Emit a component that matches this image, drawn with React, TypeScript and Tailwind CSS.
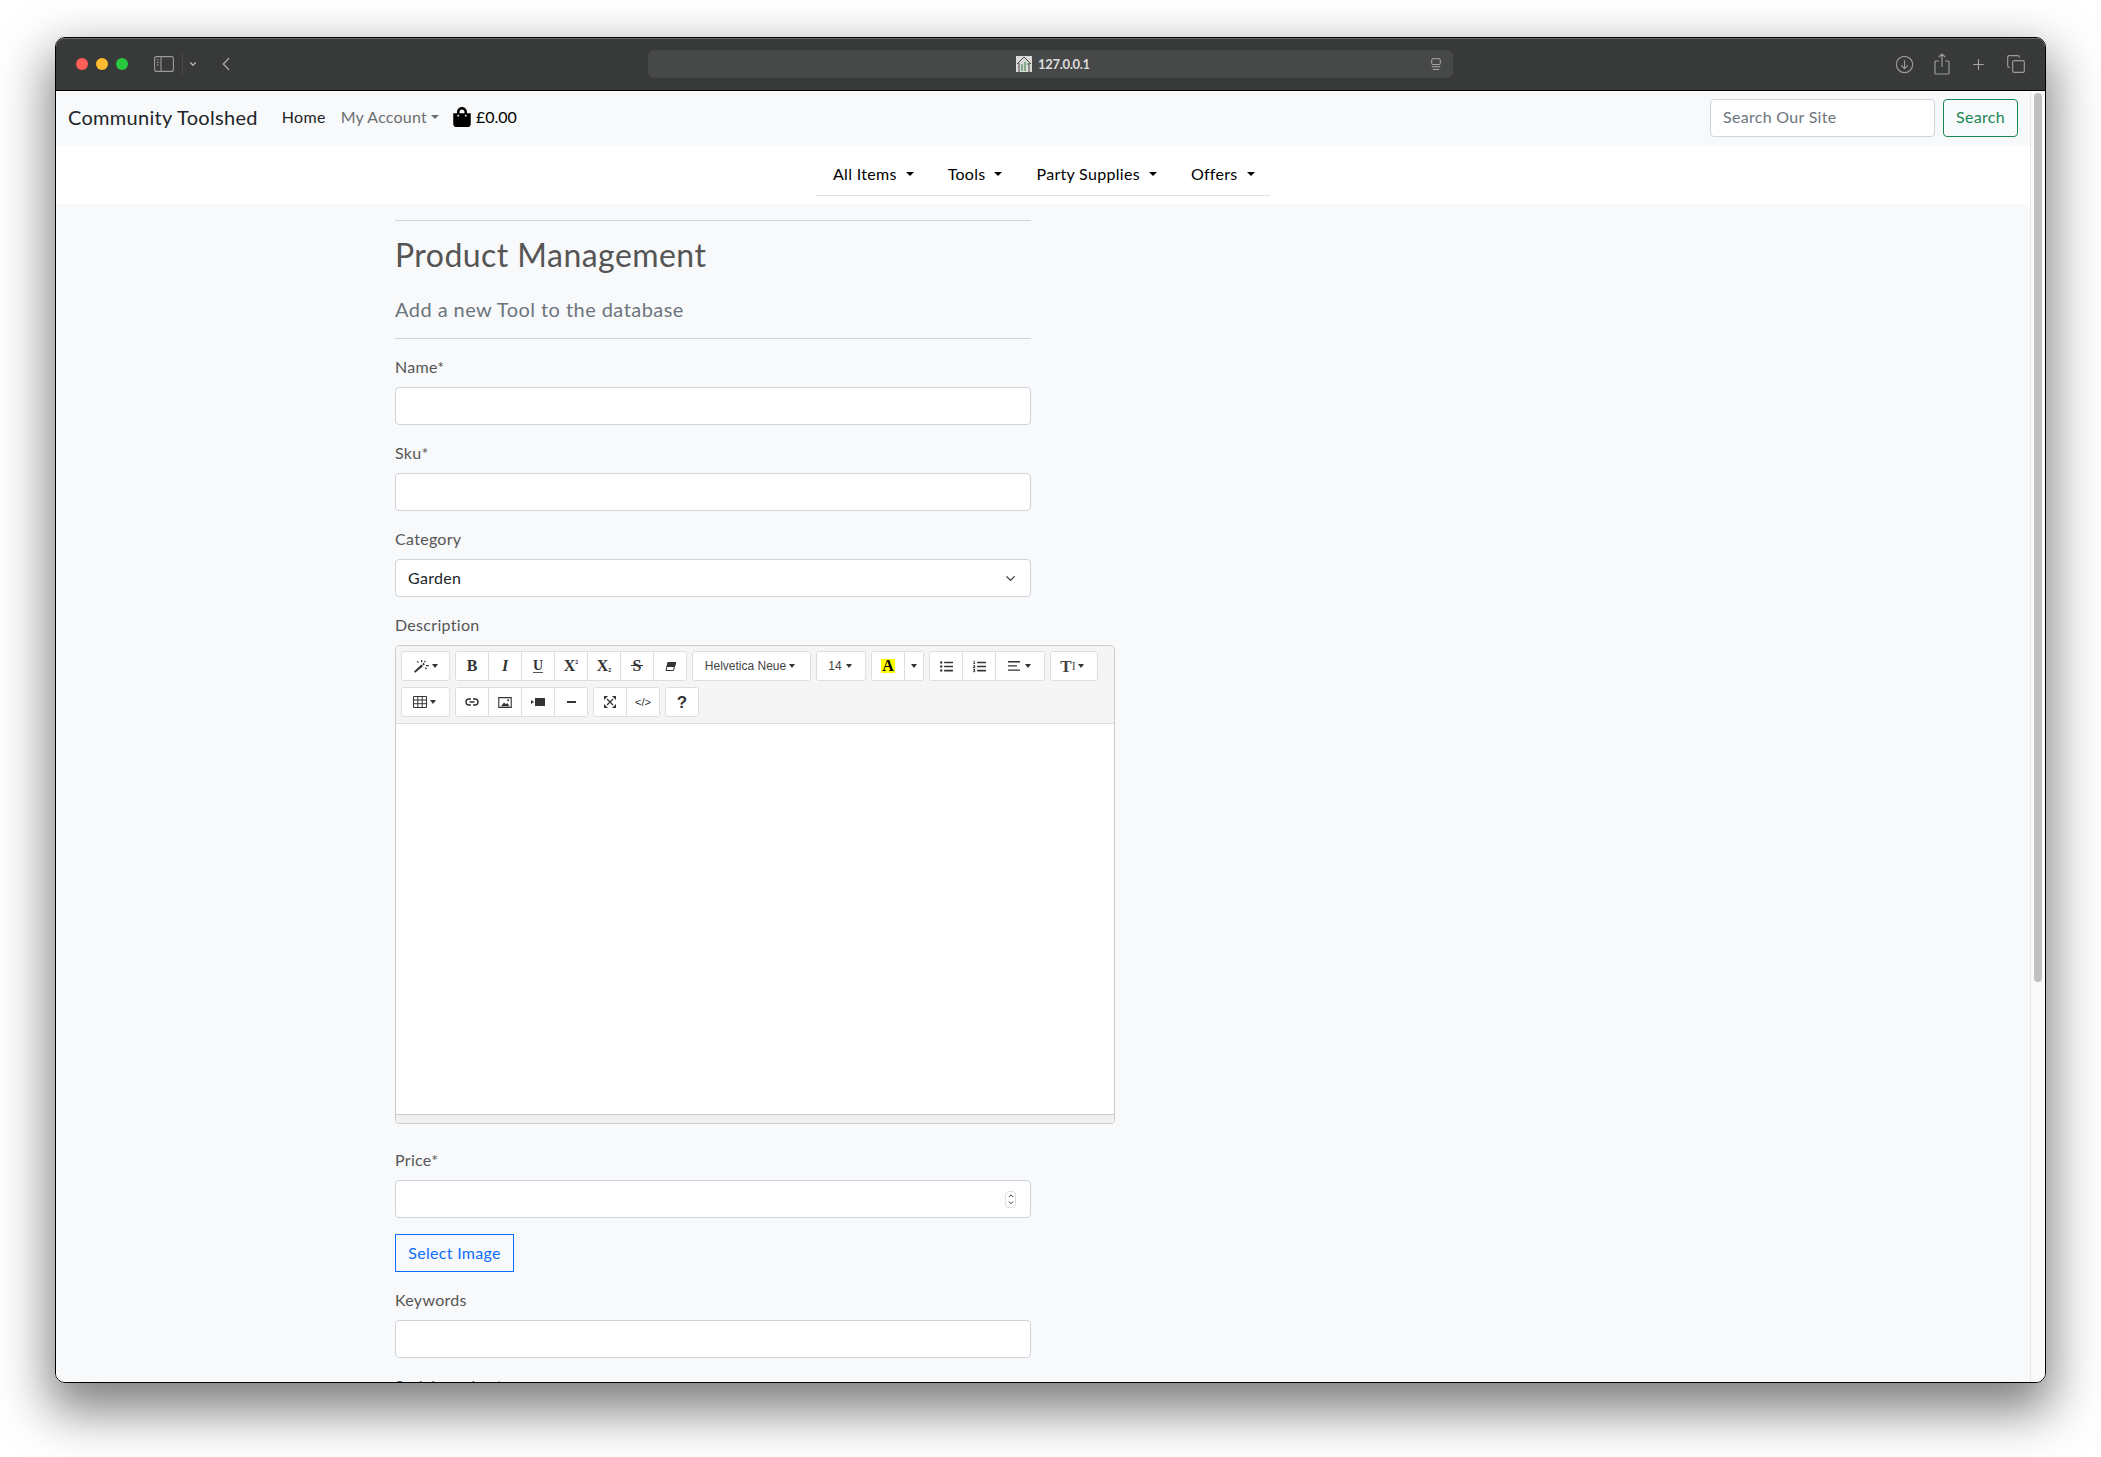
import { FaListOl, FaListUl, FaShoppingBag } from "react-icons/fa";
import { ChevronDown, ChevronLeft, ChevronUp, Copy, Plus } from "lucide-react";
import type { ReactNode } from "react";

const BODY_FONT = "font-['Lato','Noto_Sans',sans-serif]";
const TOOL_BTN =
  "flex h-[28px] items-center justify-center border-r border-[#ddd] bg-white text-[#333] last:border-r-0";

function Caret({ className = "" }: { className?: string }) {
  return <span className={`inline-block h-0 w-0 border-x-[3.5px] border-t-[4px] border-x-transparent border-t-current ${className}`} />;
}

function NavCaret() {
  return <span className="ml-[9px] inline-block h-0 w-0 border-x-[4px] border-t-[4.5px] border-x-transparent border-t-current" />;
}

function Field({ label, children }: { label: string; children: ReactNode }) {
  return (
    <div className="mb-4">
      <div className="mb-2 h-6 text-[16px] leading-6 text-[#555]">{label}</div>
      {children}
    </div>
  );
}

function TextBox({ children }: { children?: ReactNode }) {
  return (
    <div className="flex h-[38px] w-[636px] items-center rounded-[4px] border border-[#ced4da] bg-white">{children}</div>
  );
}

function ToolGroup({ children }: { children: ReactNode }) {
  return <div className="flex h-[30px] overflow-hidden rounded-[3px] border border-[#ddd] bg-white">{children}</div>;
}

function ToolBtn({ w = 33, children }: { w?: number; children: ReactNode }) {
  return (
    <div className={TOOL_BTN} style={{ width: w }}>
      {children}
    </div>
  );
}

function Serif({ children, italic }: { children: ReactNode; italic?: boolean }) {
  return (
    <span className={`font-['Liberation_Serif',serif] text-[16px] font-bold leading-none ${italic ? "italic" : ""}`}>{children}</span>
  );
}

function EditorToolbar() {
  return (
    <div className="h-[78px] border-b border-[#ddd] bg-[#f5f5f5] pl-[5px] pt-[5px] tracking-normal">
      <div className="flex h-[30px] gap-[5px]">
        <ToolGroup>
          <ToolBtn w={47}>
            <svg viewBox="0 0 16 14" className="mr-[2px] h-[14px] w-[16px]" fill="currentColor">
              <path d="M1.200 13.800L0 12.600l7.400-7 1.600 1.600zM8.200 5l1.200-1.200 1.400 1.400-1.200 1.200z" />
              <path d="M7 1h1.200v2.200H7zM11 1.500l1 .7-1.200 1.400-1-.7zM3.500 2l1.400 1.400-.8.7L2.700 2.700zM12 6h2.800v1.200H12zM10.800 9l1-.7 1.200 1.500-1 .7z" />
            </svg>
            <Caret />
          </ToolBtn>
        </ToolGroup>
        <ToolGroup>
          <ToolBtn><Serif>B</Serif></ToolBtn>
          <ToolBtn><Serif italic>I</Serif></ToolBtn>
          <ToolBtn>
            <span className="border-b border-[#555] font-['Liberation_Serif',serif] text-[14px] font-bold leading-[13px]">U</span>
          </ToolBtn>
          <ToolBtn><Serif>X</Serif><span className="mb-[7px] text-[5px] font-bold leading-none">2</span></ToolBtn>
          <ToolBtn><Serif>X</Serif><span className="mt-[9px] text-[5px] font-bold leading-none">2</span></ToolBtn>
          <ToolBtn>
            <span className="relative flex">
              <Serif>S</Serif>
              <span className="absolute -inset-x-[2px] top-[7px] h-px bg-[#333]" />
            </span>
          </ToolBtn>
          <ToolBtn w={32}>
            <svg viewBox="0 0 11 9" className="h-[9px] w-[11px]" fill="none" stroke="currentColor" strokeWidth="1">
              <path d="M3 .5h7.500L8.500 8.500H1z" />
              <path d="M3 .5h7.500L9.500 4.500H2z" fill="currentColor" />
            </svg>
          </ToolBtn>
        </ToolGroup>
        <ToolGroup>
          <ToolBtn w={117}>
            <span className="mr-[3px] font-['Liberation_Sans',sans-serif] text-[12px] text-[#444]">Helvetica Neue</span>
            <Caret className="mr-[3px]" />
          </ToolBtn>
        </ToolGroup>
        <ToolGroup>
          <ToolBtn w={48}>
            <span className="mr-[4px] font-['Liberation_Sans',sans-serif] text-[12px] text-[#444]">14</span>
            <Caret className="mr-[2px]" />
          </ToolBtn>
        </ToolGroup>
        <ToolGroup>
          <ToolBtn>
            <span className="bg-[#ff0] px-[1px] font-['Liberation_Serif',serif] text-[16px] font-bold leading-[14px] text-black">A</span>
          </ToolBtn>
          <ToolBtn w={18}><Caret /></ToolBtn>
        </ToolGroup>
        <ToolGroup>
          <ToolBtn><FaListUl className="size-[13px]" /></ToolBtn>
          <ToolBtn><FaListOl className="size-[13px]" /></ToolBtn>
          <ToolBtn w={48}>
            <svg viewBox="0 0 12 10" className="mr-[5px] h-[10px] w-[12px]" fill="currentColor">
              <path d="M0 0h12v1.400H0zM0 4.200h9v1.400H0zM0 8.400h12v1.400H0z" />
            </svg>
            <Caret className="mr-[2px]" />
          </ToolBtn>
        </ToolGroup>
        <ToolGroup>
          <ToolBtn w={46}>
            <span className="font-['Liberation_Serif',serif] text-[17px] font-bold leading-none text-[#444]">T</span>
            <span className="mr-[2px] font-['Liberation_Serif',serif] text-[12px] leading-none text-[#555]">I</span>
            <Caret className="mr-[4px]" />
          </ToolBtn>
        </ToolGroup>
      </div>
      <div className="mt-[6px] flex h-[30px] gap-[5px]">
        <ToolGroup>
          <ToolBtn w={47}>
            <svg viewBox="0 0 14 12" className="mr-[3px] size-[14px]" fill="none" stroke="currentColor" strokeWidth="1">
              <path d="M.5.5h13v11H.5zM.5 4h13M.5 7.700h13M4.800.5v11M9.200.5v11" />
            </svg>
            <Caret className="mr-[3px]" />
          </ToolBtn>
        </ToolGroup>
        <ToolGroup>
          <ToolBtn>
            <svg viewBox="0 0 14 8" className="h-[8px] w-[14px]" fill="none" stroke="currentColor" strokeWidth="1.400">
              <path d="M6 1H4a3 3 0 0 0 0 6h2M8 1h2a3 3 0 0 1 0 6H8M4.500 4h5" />
            </svg>
          </ToolBtn>
          <ToolBtn>
            <svg viewBox="0 0 15 12" className="h-[11px] w-[14px]" fill="none" stroke="currentColor">
              <path d="M.7.7h13.600v10.600H.7z" strokeWidth="1.200" />
              <path d="M3 10l3.500-4 2 2 1.500-1.500 2.500 3.500z" fill="currentColor" stroke="none" />
              <circle cx="11" cy="3.600" r="1.100" fill="currentColor" stroke="none" />
            </svg>
          </ToolBtn>
          <ToolBtn>
            <svg viewBox="0 0 14 8" className="h-[8px] w-[14px]" fill="currentColor">
              <path d="M4 0h10v8H4zM0 2l3 2-3 2z" />
            </svg>
          </ToolBtn>
          <ToolBtn w={32}><span className="block h-[2px] w-[9px] bg-[#333]" /></ToolBtn>
        </ToolGroup>
        <ToolGroup>
          <ToolBtn>
            <svg viewBox="0 0 12 12" className="size-[12px]" fill="currentColor" stroke="currentColor">
              <path d="M3 3l6 6M9 3L3 9" strokeWidth="1.200" />
              <path d="M0 0h4L0 4zM12 0v4L8 0zM0 12V8l4 4zM12 12H8l4-4z" stroke="none" />
            </svg>
          </ToolBtn>
          <ToolBtn w={32}><span className="font-['Liberation_Sans',sans-serif] text-[11px] leading-none">&lt;/&gt;</span></ToolBtn>
        </ToolGroup>
        <ToolGroup>
          <ToolBtn w={32}><span className="font-['Liberation_Sans',sans-serif] text-[17px] font-bold leading-none">?</span></ToolBtn>
        </ToolGroup>
      </div>
    </div>
  );
}

function TitleBar() {
  return (
    <div className="flex h-[53px] items-center border-b border-black bg-[#383a39] shadow-[inset_0_1px_0_#6a6b6a]">
      <div className="ml-[20px] flex gap-[8px]">
        <span className="size-[12px] rounded-full bg-[#ff5f57]" />
        <span className="size-[12px] rounded-full bg-[#febc2e]" />
        <span className="size-[12px] rounded-full bg-[#28c840]" />
      </div>
      <svg viewBox="0 0 20 16" className="ml-[26px] h-[16px] w-[20px]" fill="none" stroke="#9a9b9a" strokeWidth="1.100">
        <rect x=".6" y=".6" width="18.800" height="14.800" rx="2" />
        <path d="M7 .6v14.800M2.800 4h2M2.800 6.500h2M2.800 9h2" />
      </svg>
      <span className="ml-[8px] h-[20px] w-px bg-[#4a4b4a]" />
      <ChevronDown className="ml-[5px] size-[10px] text-[#b5b5b5]" strokeWidth={3} />
      <ChevronLeft className="ml-[17px] size-[22px] text-[#a5a5a5]" strokeWidth={1.5} />
      <div className="relative ml-[411px] flex h-[28px] w-[805px] items-center rounded-[6px] bg-[#474948]">
        <div className="ml-[368px] flex items-center">
          <svg viewBox="0 0 16 16" className="size-[16px]">
            <rect width="16" height="16" fill="#d9dbd9" />
            <path d="M1 8l7-7 7 7M3 7v9M13 7v9" fill="none" stroke="#222" strokeWidth=".8" />
            <path d="M6 8v7M9 6v9M12 7v2" stroke="#2f7d3a" strokeWidth="1" />
          </svg>
          <span className="ml-[6px] text-[13px] font-bold leading-none tracking-[-0.3px] text-[#dcdcdc]">127.0.0.1</span>
        </div>
        <svg viewBox="0 0 11 14" className="absolute right-[12px] top-[8px] h-[13px] w-[10px]" fill="none" stroke="#b5b5b5" strokeWidth="1">
          <rect x=".8" y=".6" width="9.400" height="6.500" rx="1.200" />
          <path d="M.8 9.500h9.400M2 12.500h7" />
        </svg>
      </div>
      <svg viewBox="0 0 20 20" className="ml-[442px] size-[19px]" fill="none" stroke="#9a9b9a" strokeWidth="1.200">
        <circle cx="10" cy="10" r="8.600" />
        <path d="M10 5.500v9M6.500 11l3.500 3.500 3.500-3.500" />
      </svg>
      <svg viewBox="0 0 16 22" className="ml-[20px] h-[22px] w-[16px]" fill="none" stroke="#9a9b9a" strokeWidth="1.200">
        <path d="M5 8H2a1 1 0 0 0-1 1v11a1 1 0 0 0 1 1h12a1 1 0 0 0 1-1V9a1 1 0 0 0-1-1h-3M8 14V1M4.800 4L8 1l3.200 3" />
      </svg>
      <Plus className="ml-[20px] size-[17px] text-[#a5a5a5]" strokeWidth={1.6} />
      <Copy className="ml-[19px] size-[20px] text-[#9a9b9a]" strokeWidth={1.4} />
    </div>
  );
}

function TopNav() {
  return (
    <div className="flex h-[55px] items-center bg-[#f8f9fa] pb-[2px] pl-[12px] pr-[12px]">
      <div className="mb-[2px] flex items-center">
        <span className="text-[20px] leading-none text-[#212529]">Community Toolshed</span>
        <span className="ml-[24px] text-[16px] text-[#212529]">Home</span>
        <span className="ml-[15px] flex items-center text-[16px] tracking-[0.2px] text-[#6c6f72]">
          My Account
          <span className="ml-[4px] inline-block h-0 w-0 border-x-[4px] border-t-[4.500px] border-x-transparent border-t-current" />
        </span>
        <FaShoppingBag className="ml-[14px] h-[20px] w-[18px] text-black" />
        <span className="ml-[5px] text-[16px] tracking-normal text-black">£0.00</span>
      </div>
      <div className="ml-auto flex h-[38px] w-[225px] items-center rounded-[4px] border border-[#ced4da] bg-white pb-[2px] pl-[12px] text-[16px] text-[#6c757d]">
        Search Our Site
      </div>
      <div className="ml-[8px] flex h-[38px] w-[75px] items-center justify-center rounded-[4px] border border-[#198754] pb-[2px] text-[16px] text-[#198754]">
        Search
      </div>
    </div>
  );
}

function CategoryNav() {
  const items = ["All Items", "Tools", "Party Supplies", "Offers"];
  return (
    <div className="flex h-[58px] justify-center bg-white">
      <div className="flex h-[50px] w-[454px] items-center gap-[34px] border-b border-[#dee2e6] pl-[17px] pt-[6px]">
        {items.map((item) => (
          <span key={item} className="flex items-center text-[16px] text-black">
            {item}
            <NavCaret />
          </span>
        ))}
      </div>
    </div>
  );
}

export default function App() {
  return (
    <div className={`h-[1457px] w-[2101px] overflow-hidden bg-white pl-[55px] pt-[37px] tracking-[0.3px] ${BODY_FONT}`}>
      <div className="flex h-[1346px] w-[1991px] flex-col overflow-hidden rounded-[10px] border border-black shadow-[0_22px_50px_6px_rgba(0,0,0,0.5)]">
        <TitleBar />
        <div className="flex min-h-0 flex-1">
          <div className="min-w-0 flex-1 overflow-hidden bg-[#f8f9fa]">
            <TopNav />
            <CategoryNav />
            <main className="pl-[339px] pt-[16px]">
              <div className="w-[636px] border-t border-[#ced4da] pt-[15px]">
                <h1 className="text-[32px] leading-[38px] tracking-[0.45px] text-[#555]">Product Management</h1>
                <h4 className="mt-[23px] text-[20px] leading-6 tracking-[0.45px] text-[#6c757d]">Add a new Tool to the database</h4>
                <div className="mt-[17px] border-t border-[#ced4da]" />
              </div>
              <div className="pt-[16px]">
                <Field label="Name*"><TextBox /></Field>
                <Field label="Sku*"><TextBox /></Field>
                <Field label="Category">
                  <TextBox>
                    <span className="ml-[12px] text-[16px] text-[#212529]">Garden</span>
                    <ChevronDown className="ml-auto mr-[12px] size-[15px] text-[#343a40]" strokeWidth={2} />
                  </TextBox>
                </Field>
                <div className="mb-[24px]">
                  <div className="mb-2 h-6 text-[16px] leading-6 text-[#555]">Description</div>
                  <div className="h-[479px] w-[720px] overflow-hidden rounded-[4px] border border-[#ccc] bg-white">
                    <EditorToolbar />
                    <div className="h-[391px] border-b border-[#ccc] bg-white" />
                    <div className="h-[9px] bg-[#f0f0f0]" />
                  </div>
                </div>
                <Field label="Price*">
                  <TextBox>
                    <div className="ml-auto mr-[14px] flex h-[17px] w-[11px] flex-col items-center justify-center rounded-[4px] border border-[#ddd] bg-white text-[#222]">
                      <ChevronUp className="size-[8px]" strokeWidth={3} />
                      <ChevronDown className="size-[8px]" strokeWidth={3} />
                    </div>
                  </TextBox>
                </Field>
                <div className="mb-4 flex h-[38px] w-[119px] items-center justify-center border border-[#0d6efd] text-[16px] text-[#0d6efd]">
                  Select Image
                </div>
                <Field label="Keywords"><TextBox /></Field>
                <Field label="Serial number*"><TextBox /></Field>
              </div>
            </main>
          </div>
          <div className="w-[15px] shrink-0 border-l border-[#e8e8e8] bg-[#fafafa] pl-[3px] pt-[2px]">
            <div className="h-[889px] w-[8px] rounded-full bg-[#c1c1c1]" />
          </div>
        </div>
      </div>
    </div>
  );
}
